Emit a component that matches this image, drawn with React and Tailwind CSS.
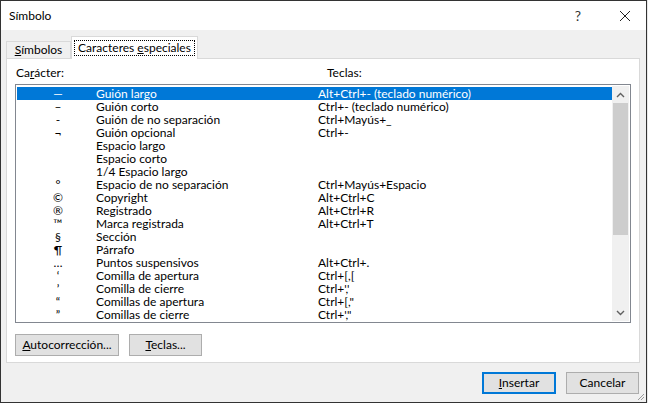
import React from 'react';

// Word "Símbolo" dialog, tab "Caracteres especiales".
const ROWS = [
  {sym: '—', name: 'Guión largo', keys: 'Alt+Ctrl+- (teclado numérico)'},
  {sym: '–', name: 'Guión corto', keys: 'Ctrl+- (teclado numérico)'},
  {sym: '-', name: 'Guión de no separación', keys: 'Ctrl+Mayús+_'},
  {sym: '¬', name: 'Guión opcional', keys: 'Ctrl+-'},
  {sym: '', name: 'Espacio largo', keys: ''},
  {sym: '', name: 'Espacio corto', keys: ''},
  {sym: '', name: '1/4 Espacio largo', keys: ''},
  {sym: '°', name: 'Espacio de no separación', keys: 'Ctrl+Mayús+Espacio'},
  {sym: '©', name: 'Copyright', keys: 'Alt+Ctrl+C'},
  {sym: '®', name: 'Registrado', keys: 'Alt+Ctrl+R'},
  {sym: '™', name: 'Marca registrada', keys: 'Alt+Ctrl+T'},
  {sym: '§', name: 'Sección', keys: ''},
  {sym: '¶', name: 'Párrafo', keys: ''},
  {sym: '…', name: 'Puntos suspensivos', keys: 'Alt+Ctrl+.'},
  {sym: '‘', name: 'Comilla de apertura', keys: 'Ctrl+[,['},
  {sym: '’', name: 'Comilla de cierre', keys: "Ctrl+','"},
  {sym: '“', name: 'Comillas de apertura', keys: 'Ctrl+[,"'},
  {sym: '”', name: 'Comillas de cierre', keys: "Ctrl+',\""},
];

function Btn({children, primary, className = ''}) {
  return (
    <button
      className={`h-[22px] whitespace-nowrap bg-[#e1e1e1] text-[12px] leading-none text-black ${
        primary ? 'border-2 border-[#0078d7]' : 'border border-[#adadad]'
      } ${className}`}>
      {children}
    </button>
  );
}

export default function App() {
  return (
    <div
      className="flex h-[403px] w-[648px] bg-[#e8e8e8] text-black"
      style={{fontFamily: 'Lato, "Noto Sans", sans-serif'}}>
      <div className="relative flex h-[403px] w-[647px] flex-col border border-[#333333] bg-[#f0f0f0]">
        {/* title bar */}
        <div className="flex h-[29px] items-center bg-white pl-2 text-[12px]">
          <span className="flex-1">Símbolo</span>
          <span className="mr-[38px] text-[14px] text-[#333]">?</span>
          <svg width="12" height="12" viewBox="0 0 12 12" className="mr-[15px]">
            <path d="M1 1 L11 11 M11 1 L1 11" stroke="#222" strokeWidth="1" />
          </svg>
        </div>

        <div className="flex flex-1 flex-col pl-[5px] pr-[6px]">
          {/* tabs */}
          <div className="flex h-[28px] items-end whitespace-nowrap text-[12px]">
            <div className="flex h-[17px] w-[65px] items-center justify-center border border-b-0 border-[#d9d9d9] bg-[#f0f0f0] pb-[1px]">
              <span>
                <u>S</u>ímbolos
              </span>
            </div>
            <div className="-mb-px relative z-10 flex h-[23px] w-[127px] items-center justify-center border border-b-0 border-[#d9d9d9] bg-white">
              <span className="border border-dotted border-black px-[3px] leading-[14px]">
                Caracteres <u>e</u>speciales
              </span>
            </div>
          </div>

          {/* tab panel */}
          <div className="flex h-[305px] flex-col border border-[#d9d9d9] bg-white px-[8px] text-[12px]">
            <div className="flex h-[25px] items-center pt-[3px]">
              <span className="w-[312px] pl-[1px]">
                Ca<u>r</u>ácter:
              </span>
              <span>Teclas:</span>
            </div>

            <div className="flex h-[239px] border border-[#828790] p-px">
              <div className="flex-1 overflow-hidden pt-px">
                {ROWS.map((r, i) => (
                  <div
                    key={r.name}
                    className={`flex h-[13px] items-center leading-[13px] ${
                      i === 0 ? 'bg-[#0078d7] text-white' : ''
                    }`}>
                    <span className="w-[79px] pl-[3px] text-center">{r.sym}</span>
                    <span className="w-[222px] whitespace-nowrap">{r.name}</span>
                    <span className="whitespace-nowrap">{r.keys}</span>
                  </div>
                ))}
              </div>
              {/* scrollbar */}
              <div className="flex w-[17px] flex-col bg-[#f0f0f0]">
                <div className="flex h-[17px] items-center justify-center">
                  <svg width="9" height="6" viewBox="0 0 9 6">
                    <path d="M1 5 L4.5 1.5 L8 5" fill="none" stroke="#606060" strokeWidth="1.4" />
                  </svg>
                </div>
                <div className="mx-px h-[132px] bg-[#cdcdcd]" />
                <div className="flex-1" />
                <div className="flex h-[17px] items-center justify-center">
                  <svg width="9" height="6" viewBox="0 0 9 6">
                    <path d="M1 1 L4.5 4.5 L8 1" fill="none" stroke="#606060" strokeWidth="1.4" />
                  </svg>
                </div>
              </div>
            </div>

            <div className="mt-[11px] flex gap-[10px]">
              <Btn className="w-[104px]">
                <u>A</u>utocorrección...
              </Btn>
              <Btn className="w-[73px]">
                <u>T</u>eclas...
              </Btn>
            </div>
          </div>

          {/* dialog buttons */}
          <div className="mt-[9px] flex justify-end gap-[10px] pr-[1px]">
            <Btn primary className="w-[74px]">
              <u>I</u>nsertar
            </Btn>
            <Btn className="w-[73px]">Cancelar</Btn>
          </div>
        </div>

        {/* resize grip */}
        <svg width="8" height="8" viewBox="0 0 8 8" className="absolute bottom-px right-px">
          <path d="M7 1 L1 7 M7 4 L4 7" stroke="#9a9a9a" strokeWidth="1" />
        </svg>
      </div>
    </div>
  );
}
